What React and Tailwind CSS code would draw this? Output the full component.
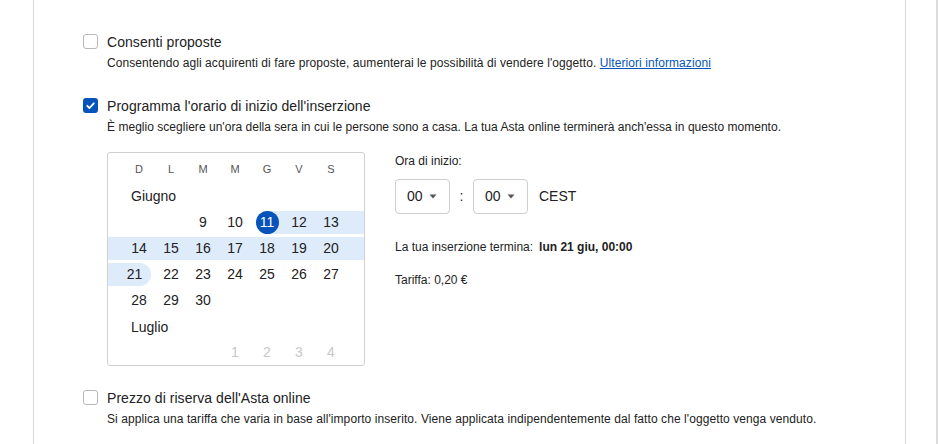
import React from "react";

const font = { fontFamily: '"Liberation Sans", Arial, Helvetica, sans-serif' };

function Checkbox({ checked }) {
  if (checked) {
    return (
      <div className="w-[15px] h-[15px] rounded-[3px] bg-[#0654ba] flex items-center justify-center shrink-0">
        <svg width="11" height="11" viewBox="0 0 11 11">
          <path d="M2.3 5.8 L4.5 8 L8.8 3.3" fill="none" stroke="white" strokeWidth="1.8" strokeLinecap="round" strokeLinejoin="round" />
        </svg>
      </div>
    );
  }
  return <div className="w-[15px] h-[15px] rounded-[3px] border border-[#b8b8b8] bg-white shrink-0" />;
}

function Section({ checked, label, children, className }) {
  return (
    <div className={"flex " + (className || "")}>
      <div className="w-[24px] shrink-0 pt-[1px]">
        <Checkbox checked={checked} />
      </div>
      <div className="flex-1">
        <div className="text-[14px] leading-[18px] text-[#222] tracking-[0.05px]">{label}</div>
        {children}
      </div>
    </div>
  );
}

const BAND = "bg-[#deebfb]";

function Cell({ n, band, selected, disabled }) {
  let bandCls = "";
  if (band === "full") bandCls = BAND + " w-full";
  else if (band === "start") bandCls = BAND + " ml-[4.5px] w-[27.5px] rounded-l-full";
  else if (band === "end") bandCls = BAND + " w-[27.5px] rounded-r-full";
  return (
    <div className="w-[32px] h-[26px] flex items-center">
      <div className={"h-[23px] " + (band && band !== "none" ? bandCls : "w-full")} />
      <div className="-ml-[32px] w-[32px] h-[26px] flex items-center justify-center">
        {n != null && (
          selected ? (
            <div className="w-[23px] h-[23px] rounded-full bg-[#0654ba] text-white flex items-center justify-center text-[14px]">
              {n}
            </div>
          ) : (
            <span className={"text-[14px] " + (disabled ? "text-[#c8c8c8]" : "text-[#222]")}>{n}</span>
          )
        )}
      </div>
    </div>
  );
}

function Week({ cells, leftBand, rightBand }) {
  return (
    <div className="flex h-[26px] items-center">
      <div className={"w-[15px] h-[23px] " + (leftBand ? BAND : "")} />
      {cells.map((c, i) => (
        <Cell key={i} {...c} />
      ))}
      <div className={"w-[17px] h-[23px] " + (rightBand ? BAND : "")} />
    </div>
  );
}

function Calendar() {
  const heads = ["D", "L", "M", "M", "G", "V", "S"];
  const e = {};
  return (
    <div className="w-[258px] h-[214px] border border-[#d0d0d0] rounded-[3px] pt-[4px] shrink-0">
      <div className="flex h-[24px] items-center pl-[15px]">
        {heads.map((h, i) => (
          <div key={i} className="w-[32px] text-center text-[11px] text-[#555]">{h}</div>
        ))}
      </div>
      <div className="h-[28px] flex items-center pl-[23px] pt-[3px] text-[14px] text-[#222]">Giugno</div>
      <Week
        rightBand
        cells={[e, e, { n: 9 }, { n: 10 }, { n: 11, band: "start", selected: true }, { n: 12, band: "full" }, { n: 13, band: "full" }]}
      />
      <Week
        leftBand
        rightBand
        cells={[14, 15, 16, 17, 18, 19, 20].map((n) => ({ n, band: "full" }))}
      />
      <Week
        leftBand
        cells={[{ n: 21, band: "end" }, { n: 22 }, { n: 23 }, { n: 24 }, { n: 25 }, { n: 26 }, { n: 27 }]}
      />
      <Week cells={[{ n: 28 }, { n: 29 }, { n: 30 }, e, e, e, e]} />
      <div className="h-[26px] flex items-center pl-[23px] pt-[2px] text-[14px] text-[#222]">Luglio</div>
      <Week cells={[e, e, e, { n: 1, disabled: true }, { n: 2, disabled: true }, { n: 3, disabled: true }, { n: 4, disabled: true }]} />
    </div>
  );
}

function Select() {
  return (
    <div className="w-[55px] h-[35px] border border-[#cfcfcf] rounded-[4px] flex items-center pl-[11px] text-[14px] text-[#222]">
      <span>00</span>
      <svg width="8" height="5" viewBox="0 0 8 5" className="ml-[6px]">
        <polygon points="0.5,0.5 7.5,0.5 4,4.5" fill="#555" />
      </svg>
    </div>
  );
}

function TimePanel() {
  return (
    <div className="ml-[30px] pt-[1px] text-[#222]">
      <div className="text-[12px] leading-[16px]">Ora di inizio:</div>
      <div className="flex items-center mt-[10px]">
        <Select />
        <div className="w-[23px] text-center text-[14px]">:</div>
        <Select />
        <div className="ml-[11px] text-[14px]">CEST</div>
      </div>
      <div className="mt-[25px] text-[12px] leading-[16px]">
        La tua inserzione termina:<span className="ml-[6px] font-bold">lun 21 giu, 00:00</span>
      </div>
      <div className="mt-[17px] text-[12px] leading-[16px]">Tariffa: 0,20 €</div>
    </div>
  );
}

export default function App() {
  return (
    <div style={font} className="w-[938px] h-[444px] bg-white overflow-hidden flex">
      <div className="w-[33px] shrink-0" />
      <div className="w-[873px] shrink-0 border-l border-r border-[#d9d9d9] pl-[49px] pt-[33px]">
        <Section label="Consenti proposte">
          <div className="mt-[4px] text-[12px] leading-[16px] text-[#222] tracking-[0.08px]">
            Consentendo agli acquirenti di fare proposte, aumenterai le possibilità di vendere l'oggetto.{" "}
            <a className="text-[#0654ba] underline">Ulteriori informazioni</a>
          </div>
        </Section>
        <Section checked label="Programma l'orario di inizio dell'inserzione" className="mt-[26px]">
          <div className="mt-[4px] text-[12px] leading-[16px] text-[#222] tracking-[0.03px]">
            È meglio scegliere un'ora della sera in cui le persone sono a casa. La tua Asta online terminerà anch'essa in questo momento.
          </div>
          <div className="flex mt-[17px]">
            <Calendar />
            <TimePanel />
          </div>
        </Section>
        <Section label="Prezzo di riserva dell'Asta online" className="mt-[23px]">
          <div className="mt-[4px] text-[12px] leading-[16px] text-[#222] tracking-[0.08px]">
            Si applica una tariffa che varia in base all'importo inserito. Viene applicata indipendentemente dal fatto che l'oggetto venga venduto.
          </div>
        </Section>
      </div>
      <div className="w-[30px] shrink-0" />
      <div className="w-[2px] shrink-0 bg-[#dcdcdc]" />
    </div>
  );
}
